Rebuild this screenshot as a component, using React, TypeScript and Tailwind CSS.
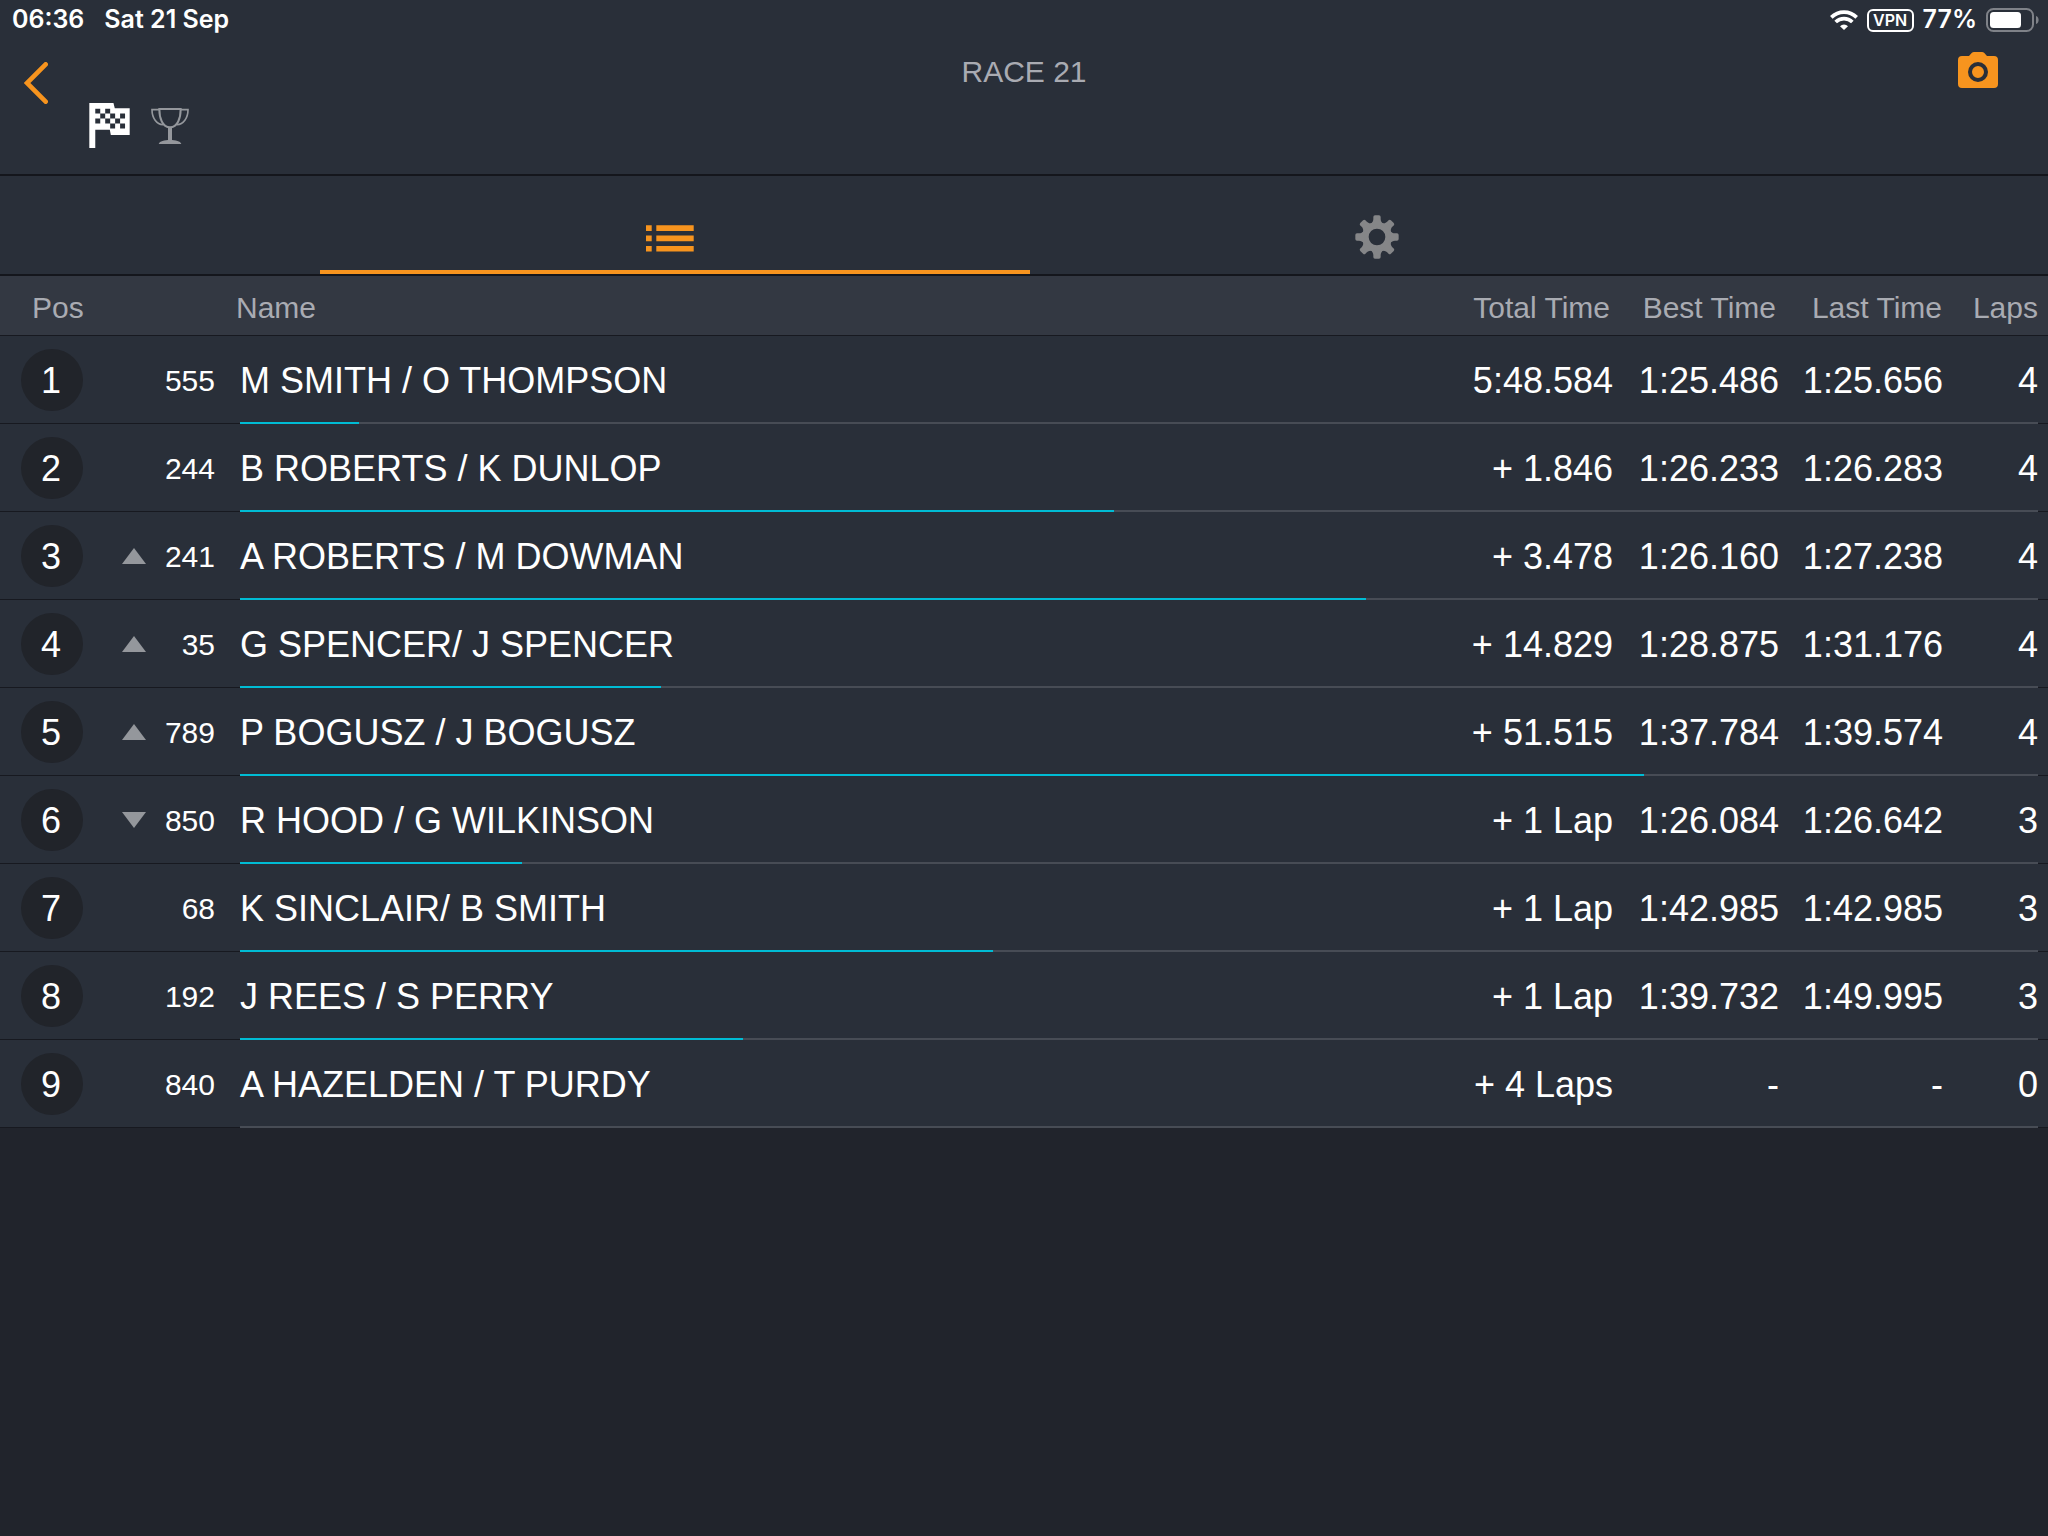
import { FunctionComponent } from 'react'

interface Entry {
  pos: number
  move?: 'up' | 'down'
  number: string
  name: string
  total: string
  best: string
  last: string
  laps: number
  progress: number
}

const entries: Entry[] = [
  { pos: 1, number: '555', name: 'M SMITH / O THOMPSON', total: '5:48.584', best: '1:25.486', last: '1:25.656', laps: 4, progress: 6.6 },
  { pos: 2, number: '244', name: 'B ROBERTS / K DUNLOP', total: '+ 1.846', best: '1:26.233', last: '1:26.283', laps: 4, progress: 48.6 },
  { pos: 3, move: 'up', number: '241', name: 'A ROBERTS / M DOWMAN', total: '+ 3.478', best: '1:26.160', last: '1:27.238', laps: 4, progress: 62.6 },
  { pos: 4, move: 'up', number: '35', name: 'G SPENCER/ J SPENCER', total: '+ 14.829', best: '1:28.875', last: '1:31.176', laps: 4, progress: 23.4 },
  { pos: 5, move: 'up', number: '789', name: 'P BOGUSZ / J BOGUSZ', total: '+ 51.515', best: '1:37.784', last: '1:39.574', laps: 4, progress: 78.1 },
  { pos: 6, move: 'down', number: '850', name: 'R HOOD / G WILKINSON', total: '+ 1 Lap', best: '1:26.084', last: '1:26.642', laps: 3, progress: 15.7 },
  { pos: 7, number: '68', name: 'K SINCLAIR/ B SMITH', total: '+ 1 Lap', best: '1:42.985', last: '1:42.985', laps: 3, progress: 41.9 },
  { pos: 8, number: '192', name: 'J REES / S PERRY', total: '+ 1 Lap', best: '1:39.732', last: '1:49.995', laps: 3, progress: 28 },
  { pos: 9, number: '840', name: 'A HAZELDEN / T PURDY', total: '+ 4 Laps', best: '-', last: '-', laps: 0, progress: 0 },
]

const WifiIcon = () => (
  <svg width="28" height="20" viewBox="0 0 84 60" fill="none" stroke="white" strokeWidth="11">
    <path d="M4 22A54 54 0 0 1 80 22" />
    <path d="M17 36A35.500 35.500 0 0 1 67 36" />
    <path d="M42 60L30 49A16.500 16.500 0 0 1 54 49Z" fill="white" stroke="none" />
  </svg>
)

const BatteryIcon = () => (
  <svg width="54" height="24" viewBox="0 0 54 24">
    <rect x="1" y="1" width="46" height="22" rx="6.500" fill="none" stroke="#7f8288" strokeWidth="2" />
    <rect x="4" y="4" width="31" height="16" rx="3.500" fill="white" />
    <path d="M50 8C53.500 9 53.500 15 50 16Z" fill="#7f8288" />
  </svg>
)

const FlagIcon = () => (
  <svg width="41" height="45" viewBox="0 0 122 136">
    <path
      fill="white"
      fillRule="evenodd"
      d="M0 0H73L77 16H122V97H65L62 81H18V136H0ZM18 17v15h15v-15zM48 17v15h15v-15zM33 32v15h15v-15zM63 32v15h15v-15zM93 32v15h15v-15zM18 47v15h15v-15zM48 47v15h15v-15zM78 47v15h15v-15zM63 62v15h15v-15zM93 62v15h15v-15z"
    />
  </svg>
)

const TrophyIcon = () => (
  <svg width="38" height="36" viewBox="0 0 114 108" fill="none" stroke="#94979c" strokeWidth="6">
    <path d="M25 3H89C89 30 80 58 57 58S25 30 25 3Z" />
    <path d="M25 5H3C3 30 17 49 36 50M89 5H111C111 30 97 49 78 50" strokeWidth="5" />
    <path d="M57 58V98" strokeWidth="12" />
    <path d="M23 108C26 99 40 96 57 96S88 99 91 108Z" fill="#94979c" stroke="none" />
  </svg>
)

const CameraIcon = () => (
  <svg width="40" height="36" viewBox="0 0 120 108">
    <path
      fill="#f7941e"
      d="M12 12H33L41 3Q44 0 48 0H72Q76 0 79 3L87 12H108Q120 12 120 24V96Q120 108 108 108H12Q0 108 0 96V24Q0 12 12 12Z"
    />
    <circle cx="60" cy="60" r="24" fill="none" stroke="#292f39" strokeWidth="12" />
  </svg>
)

const ListIcon = () => (
  <svg width="48" height="27" viewBox="0 0 48 27" fill="#f7941e">
    <path d="M0 0.200H5.700V5.900H0ZM0 10.500H5.700V16.200H0ZM0 20.900H5.700V26.600H0ZM10.300 0.200H47.700V5.900H10.300ZM10.300 10.500H47.700V16.200H10.300ZM10.300 20.900H47.700V26.600H10.300Z" />
  </svg>
)

const GearIcon = () => (
  <svg width="44" height="44" viewBox="-66 -66 132 132" fill="#858688">
    <circle r="35" fill="none" stroke="#858688" strokeWidth="20" />
    {[0, 45, 90, 135, 180, 225, 270, 315].map((angle) => (
      <path
        key={angle}
        transform={`rotate(${angle})`}
        d="M-19 -38C-14 -44 -11 -48 -11 -54V-60Q-11 -65 -6 -65H6Q11 -65 11 -60V-54C11 -48 14 -44 19 -38Z"
      />
    ))}
  </svg>
)

const MoveIcon: FunctionComponent<{ move: 'up' | 'down' }> = ({ move }) => (
  <svg width="24" height="16" viewBox="0 0 24 16" fill="#94979c" role="img" aria-label={move}>
    <path d={move === 'up' ? 'M12 0L24 16H0Z' : 'M0 0H24L12 16Z'} />
  </svg>
)

const StatusBar = () => (
  <div className="h-10 pl-3 pr-2 flex items-center justify-between font-[Inter,sans-serif] text-[25px] font-semibold text-white">
    <div className="flex gap-5">
      <span>06:36</span>
      <span>Sat 21 Sep</span>
    </div>
    <div className="flex items-center gap-[9px]">
      <WifiIcon />
      <span className="h-[23px] w-[47px] flex items-center justify-center rounded-md border-2 border-white text-base">
        VPN
      </span>
      <span>77%</span>
      <BatteryIcon />
    </div>
  </div>
)

const EntryRow: FunctionComponent<{ entry: Entry }> = ({ entry }) => (
  <tr className="relative h-22 bg-[#292f39] text-4xl text-white shadow-[inset_0_-1px_#171920]">
    <td className="pl-[21px]">
      <span className="size-[62px] pt-0.5 pr-0.5 flex items-center justify-center rounded-full bg-[#21242a]">
        {entry.pos}
      </span>
    </td>
    <td>
      <div className="pl-[18px] pr-5 flex items-center justify-between text-3xl">
        <span>{entry.move && <MoveIcon move={entry.move} />}</span>
        <span className="pt-0.5">{entry.number}</span>
      </div>
    </td>
    <td className="pl-[5px] pt-0.5 whitespace-nowrap">
      {entry.name}
      {/* lap progress, drawn along the bottom edge of the row */}
      <div className="absolute left-60 right-[10px] bottom-0 h-0.5 bg-[#474c55]">
        <div className="h-full bg-[#00bcd4]" style={{ width: `${entry.progress}%` }} />
      </div>
    </td>
    <td className="pt-0.5 text-right">{entry.total}</td>
    <td className="pt-0.5 text-right">{entry.best}</td>
    <td className="pt-0.5 text-right">{entry.last}</td>
    <td className="pt-0.5 pr-[10px] text-right">{entry.laps}</td>
  </tr>
)

const App = () => {
  return (
    <div className="min-h-screen bg-[#21242c] font-['Liberation_Sans',Arial,sans-serif]">
      <header className="bg-[#292f39] border-b-2 border-[#14161c]">
        <StatusBar />
        <div className="h-[134px] grid grid-cols-[1fr_auto_1fr] items-start">
          <div className="pl-6 pt-[22px] flex items-start">
            <button type="button" aria-label="Back" className="w-[65px]">
              <svg width="24" height="42" viewBox="0 0 72 126" fill="none" stroke="#f7941e" strokeWidth="14">
                <path d="M65 7L9 63L65 119" strokeLinecap="round" />
              </svg>
            </button>
            <div className="pt-[41px] flex items-center gap-[21px]">
              <FlagIcon />
              <TrophyIcon />
            </div>
          </div>
          <h1 className="pt-[14px] text-3xl text-[#a9abb2]">RACE 21</h1>
          <button type="button" aria-label="Take photo" className="mt-3 mr-[50px] justify-self-end">
            <CameraIcon />
          </button>
        </div>
      </header>
      <nav className="h-[100px] pl-80 pr-[324px] grid grid-cols-[355fr_347fr] bg-[#292f39] border-b-2 border-[#14161c]">
        <button
          type="button"
          aria-label="Results"
          className="pt-[30px] pr-[10px] flex items-center justify-center border-b-4 border-[#f7941e]"
        >
          <ListIcon />
        </button>
        <button type="button" aria-label="Settings" className="pt-6 flex items-center justify-center">
          <GearIcon />
        </button>
      </nav>
      <table className="w-full table-fixed border-collapse">
        <colgroup>
          <col className="w-[104px]" />
          <col className="w-[131px]" />
          <col />
          <col className="w-[170px]" />
          <col className="w-[166px]" />
          <col className="w-[164px]" />
          <col className="w-[105px]" />
        </colgroup>
        <thead>
          <tr className="h-15 bg-[#333842] text-3xl text-[#a9abb2] shadow-[inset_0_-1px_#171920]">
            <th className="pt-1 pl-8 text-left font-normal">Pos</th>
            <td />
            <th className="pt-1 pl-px text-left font-normal">Name</th>
            <th className="pt-1 pr-[3px] text-right font-normal">Total Time</th>
            <th className="pt-1 pr-[3px] text-right font-normal">Best Time</th>
            <th className="pt-1 pr-px text-right font-normal">Last Time</th>
            <th className="pt-1 pr-[10px] text-right font-normal">Laps</th>
          </tr>
        </thead>
        <tbody>
          {entries.map((entry) => (
            <EntryRow key={entry.pos} entry={entry} />
          ))}
        </tbody>
      </table>
    </div>
  )
}

export default App
